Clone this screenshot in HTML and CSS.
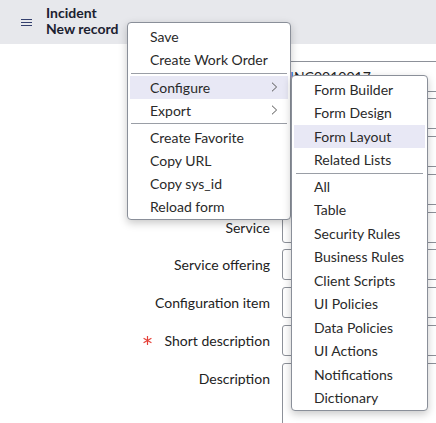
FILE: index.html
```html
<!DOCTYPE html>
<html>
<head>
<meta charset="utf-8">
<link rel="stylesheet" href="styles.css">
</head>
<body>
<div class="page">
  <header class="header">
    <div class="burger"><span></span><span></span><span></span></div>
    <div class="title">
      <div>Incident</div>
      <div>New record</div>
    </div>
  </header>

  <main class="form">
    <div class="label">Number</div>
    <div class="field"><span class="caret">I</span>NC0010017</div>
    <div class="label"><span class="req"></span>Caller</div>
    <div class="field"></div>
    <div class="label">Category</div>
    <div class="field"></div>
    <div class="label">Subcategory</div>
    <div class="field"></div>
    <div class="label">Service</div>
    <div class="field"></div>
    <div class="label">Service offering</div>
    <div class="field"></div>
    <div class="label">Configuration item</div>
    <div class="field"></div>
    <div class="label"><svg class="req" width="9" height="9" viewBox="0 0 9 9"><g stroke="#e5423a" stroke-width="1.2" stroke-linecap="round"><line x1="4.5" y1="0.5" x2="4.5" y2="8.5"/><line x1="1" y1="2.5" x2="8" y2="6.5"/><line x1="1" y1="6.5" x2="8" y2="2.5"/></g></svg>Short description</div>
    <div class="field"></div>
    <div class="label">Description</div>
    <div class="field area"></div>
  </main>

  <div class="menu main-menu">
    <div class="item">Save</div>
    <div class="item">Create Work Order</div>
    <div class="sep"></div>
    <div class="item active">Configure<svg class="chev" width="7" height="10" viewBox="0 0 7 10"><polyline points="1,0.7 5.6,5 1,9.3" fill="none" stroke="#555" stroke-width="1"/></svg></div>
    <div class="item">Export<svg class="chev" width="7" height="10" viewBox="0 0 7 10"><polyline points="1,0.7 5.6,5 1,9.3" fill="none" stroke="#555" stroke-width="1"/></svg></div>
    <div class="sep"></div>
    <div class="item">Create Favorite</div>
    <div class="item">Copy URL</div>
    <div class="item">Copy sys_id</div>
    <div class="item">Reload form</div>
  </div>

  <div class="menu sub-menu">
    <div class="item">Form Builder</div>
    <div class="item">Form Design</div>
    <div class="item active">Form Layout</div>
    <div class="item">Related Lists</div>
    <div class="sep"></div>
    <div class="item">All</div>
    <div class="item">Table</div>
    <div class="item">Security Rules</div>
    <div class="item">Business Rules</div>
    <div class="item">Client Scripts</div>
    <div class="item">UI Policies</div>
    <div class="item">Data Policies</div>
    <div class="item">UI Actions</div>
    <div class="item">Notifications</div>
    <div class="item">Dictionary</div>
  </div>
</div>
</body>
</html>
```

FILE: styles.css
```css
html, body {
  margin: 0;
  padding: 0;
}
body {
  width: 436px;
  height: 423px;
  overflow: hidden;
  background: #ffffff;
  font-family: Lato, "Open Sans", sans-serif;
  font-size: 14px;
  color: #262626;
}
.page {
  position: relative;
  width: 436px;
  height: 423px;
  overflow: hidden;
}
.header {
  box-sizing: border-box;
  height: 44px;
  background: #e7e8ec;
  display: flex;
  align-items: flex-start;
  padding: 4.5px 0 0 21px;
}
.burger {
  width: 11px;
  margin-top: 14px;
  display: flex;
  flex-direction: column;
  gap: 2px;
}
.burger span {
  display: block;
  height: 1.2px;
  background: #34406e;
}
.title {
  margin-left: 14px;
  font-weight: 700;
  line-height: 16px;
  color: #1b2130;
}
.form {
  display: grid;
  grid-template-columns: 270px 320px;
  column-gap: 12px;
  row-gap: 6.75px;
  padding-top: 16.5px;
}
.label {
  height: 31px;
  display: flex;
  align-items: center;
  justify-content: flex-end;
  align-self: start;
  color: #222;
}
.req {
  margin-right: 13px;
}
.field {
  box-sizing: border-box;
  height: 31px;
  border: 1px solid #8d9199;
  border-radius: 3px;
  padding: 0 7px;
  display: flex;
  align-items: center;
  color: #222;
}
.field.area {
  height: 90px;
}
.caret {
  color: #2f6fd6;
}
.menu {
  position: absolute;
  box-sizing: border-box;
  background: #fff;
  border: 1px solid #8a8f99;
  border-radius: 4px;
  box-shadow: 0 3px 8px rgba(0, 0, 0, 0.22);
  color: #2a2a2a;
}
.main-menu {
  left: 127px;
  top: 22px;
  width: 164px;
  padding: 2px 0 1px;
}
.main-menu .item {
  height: 23px;
  margin: 0 2px;
  padding: 0 10px 0 20px;
  display: flex;
  align-items: center;
  justify-content: space-between;
}
.main-menu .sep {
  height: 1px;
  background: #9a9ea6;
  margin: 1.5px 3px 2px;
}
.sub-menu {
  left: 291px;
  top: 75px;
  width: 137px;
  padding: 1.5px 0 0;
}
.sub-menu .item {
  height: 23.5px;
  margin: 0 2px;
  padding: 0 0 0 20px;
  display: flex;
  align-items: center;
}
.sub-menu .sep {
  height: 1px;
  background: #9a9ea6;
  margin: 1px 4px;
}
.item.active {
  background: #e8e8f5;
}
.chev {
  display: block;
}
```
